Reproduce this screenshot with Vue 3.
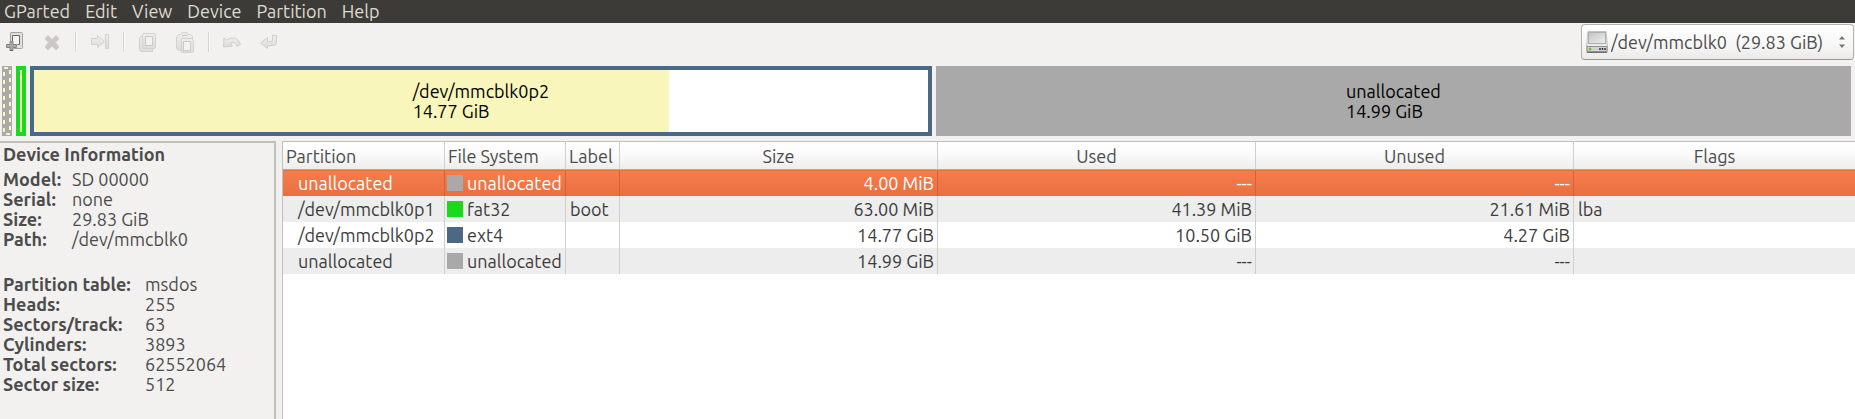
<script setup>
import { ref } from 'vue'

const menus = ['GParted', 'Edit', 'View', 'Device', 'Partition', 'Help']
const device = ref('/dev/mmcblk0')

const identity = [
  ['Model:', 'SD 00000'],
  ['Serial:', 'none'],
  ['Size:', '29.83 GiB'],
  ['Path:', '/dev/mmcblk0'],
]
const geometry = [
  ['Partition table:', 'msdos'],
  ['Heads:', '255'],
  ['Sectors/track:', '63'],
  ['Cylinders:', '3893'],
  ['Total sectors:', '62552064'],
  ['Sector size:', '512'],
]

const rows = [
  { name: 'unallocated', fs: 'unallocated', kind: 'free', label: '', size: '4.00 MiB', used: '---', unused: '---', flags: '' },
  { name: '/dev/mmcblk0p1', fs: 'fat32', kind: 'fat', label: 'boot', size: '63.00 MiB', used: '41.39 MiB', unused: '21.61 MiB', flags: 'lba' },
  { name: '/dev/mmcblk0p2', fs: 'ext4', kind: 'ext', label: '', size: '14.77 GiB', used: '10.50 GiB', unused: '4.27 GiB', flags: '' },
  { name: 'unallocated', fs: 'unallocated', kind: 'free', label: '', size: '14.99 GiB', used: '---', unused: '---', flags: '' },
]
const selected = ref(0)
const usedPercent = (10.5 / 14.77) * 100
</script>

<template>
  <div class="window">
    <nav class="menubar">
      <button v-for="m in menus" :key="m" type="button">{{ m }}</button>
    </nav>

    <div class="toolbar">
      <svg class="defs" width="0" height="0" aria-hidden="true">
        <defs>
          <linearGradient id="pale" x1="0" y1="0" x2="0" y2="1">
            <stop offset="0" stop-color="#efeeed" />
            <stop offset="1" stop-color="#dedcda" />
          </linearGradient>
        </defs>
      </svg>
      <div class="group">
        <button type="button" aria-label="New">
          <svg viewBox="0 0 24 24">
            <path d="M8 2.500H18.500Q19.500 2.500 19.500 3.500V17.500Q19.500 18.500 18.500 18.500H8.500Q7.500 18.500 7.500 17.500V3.500Q7.500 2.500 8 2.500Z" fill="#e0dfde" stroke="#a3a19e" />
            <path d="M9.500 5.500H16.500V14.500H9.500Z" fill="#f6f5f4" stroke="#696867" />
            <path d="M6 11.500H11V14H14.500V18H11V21.500H6V18H2.500V14H6Z" fill="#f2f1f0" />
            <path d="M7 11.500H10V14.500H13.500V17.500H10V20.500H7V17.500H3.500V14.500H7Z" fill="#aaa9a6" stroke="#858482" />
            <path d="M7 20.500H10" stroke="#5f5e5c" />
          </svg>
        </button>
        <button type="button" aria-label="Delete" disabled>
          <svg viewBox="0 0 24 24">
            <path d="M8 5.500 12 9.500 16 5.500 19 8.500 15.500 12.500 19 17 16 20 12 16 8 20 5 17 8.500 12.500 5 8.500Z" fill="#cbc7c4" stroke="#d2cecb" stroke-linejoin="round" />
          </svg>
        </button>
      </div>
      <span class="sep"></span>
      <button type="button" aria-label="Resize/Move" disabled>
        <svg viewBox="0 0 24 24">
          <path d="M3.500 8.500H9.500V5.500L16.500 11.500 9.500 17.500V14.500H3.500Z" fill="url(#pale)" stroke="#d3d1cf" stroke-linejoin="round" />
          <path d="M17.500 4.500H20.500V18.500H17.500Z" fill="url(#pale)" stroke="#d3d1cf" />
        </svg>
      </button>
      <span class="sep"></span>
      <div class="group">
        <button type="button" aria-label="Copy" disabled>
          <svg viewBox="0 0 24 24">
            <path d="M5.500 6.500H16.500V21.500H5.500Q3.500 21.500 3.500 19.500V8.500Q3.500 6.500 5.500 6.500Z" fill="url(#pale)" stroke="#d3d1cf" />
            <path d="M8 3.500H18Q19.500 3.500 19.500 5V17Q19.500 18.500 18 18.500H8Q6.500 18.500 6.500 17V5Q6.500 3.500 8 3.500Z" fill="url(#pale)" stroke="#d3d1cf" />
            <path d="M9.500 6.500H16.500V15.500H9.500Z" fill="#f3f2f1" stroke="#cbc9c7" />
          </svg>
        </button>
        <button type="button" aria-label="Paste" disabled>
          <svg viewBox="0 0 24 24">
            <path d="M5.500 4.500H8L9 2.500H14L15 4.500H17.500L19.500 6.500V20.500H5.500L3.500 18.500V6.500Z" fill="url(#pale)" stroke="#d3d1cf" stroke-linejoin="round" />
            <path d="M9 5.500H14" stroke="#c9c7c5" />
            <path d="M8.500 8.500H18.500L20.500 10.500V21.500Q20.500 22.500 19.500 22.500H9.500Q8.500 22.500 8.500 21.500Z" fill="url(#pale)" stroke="#d3d1cf" />
            <path d="M10.500 11.500H17.500V20.500H10.500Z" fill="#f3f2f1" stroke="#cbc9c7" />
          </svg>
        </button>
      </div>
      <span class="sep"></span>
      <div class="group">
        <button type="button" aria-label="Undo" disabled>
          <svg viewBox="0 0 24 24">
            <path d="M3 8 5.500 10Q15 4 19.500 14L16.500 16.500Q14 11 9.500 13L11.500 16 2.500 17Z" fill="url(#pale)" stroke="#d0cecb" stroke-linejoin="round" />
          </svg>
        </button>
        <button type="button" aria-label="Apply" disabled>
          <svg viewBox="0 0 24 24">
            <path d="M14.500 5.500H18.500V12Q18.500 15.500 15 15.500H9.500V18.500L2.500 13 9.500 7.500V11.500H13Q14.500 11.500 14.500 10Z" fill="url(#pale)" stroke="#d0cecb" stroke-linejoin="round" />
          </svg>
        </button>
      </div>

      <div class="combo">
        <svg class="disk" viewBox="0 0 22 22" aria-hidden="true">
          <defs>
            <linearGradient id="plate" x1="0" y1="0" x2="1" y2="1">
              <stop offset="0" stop-color="#c4c4c4" />
              <stop offset="1" stop-color="#eeeeee" />
            </linearGradient>
          </defs>
          <path d="M2 .5H20L21.500 15V20.500Q21.500 21.500 20.500 21.500H1.500Q.5 21.500 .5 20.500V15Z" fill="#e9e9e9" stroke="#c2c2c2" />
          <rect x="2.500" y="1.500" width="17" height="11" fill="url(#plate)" stroke="#b0b0b0" />
          <path d="M1 15.500H21V20.500H1Z" fill="#d2d2d2" stroke="#929292" />
          <path d="M1 21.500H21" stroke="#6c6c6c" />
          <circle cx="4" cy="18" r="1.500" fill="#6fc23a" />
          <path d="M14 17V19M16.500 17V19M19 17V19" stroke="#333" stroke-width="1.500" />
        </svg>
        <select v-model="device" aria-label="Device">
          <option value="/dev/mmcblk0">/dev/mmcblk0&nbsp; (29.83 GiB)</option>
        </select>
        <svg class="arrows" viewBox="0 0 6 12" aria-hidden="true">
          <path d="M0 3.500 3 0 6 3.500ZM0 8.500H6L3 12Z" fill="#777572" />
        </svg>
      </div>
    </div>

    <div class="disk-map">
      <div class="part free tiny">
        <svg viewBox="0 0 10 70" aria-hidden="true">
          <rect x="2" y="2" width="6" height="66" fill="none" stroke="#f8f6bb" stroke-width="2" stroke-dasharray="4 4" />
        </svg>
      </div>
      <div class="part fat tiny"></div>
      <div class="part ext">
        <div class="fill" :style="{ width: usedPercent + '%' }"></div>
        <div class="caption">/dev/mmcblk0p2<br />14.77 GiB</div>
      </div>
      <div class="part free rest">
        <div class="caption">unallocated<br />14.99 GiB</div>
      </div>
    </div>

    <div class="body">
      <aside class="info">
        <h2>Device Information</h2>
        <dl class="identity">
          <template v-for="[k, v] in identity" :key="k"><dt>{{ k }}</dt><dd>{{ v }}</dd></template>
        </dl>
        <dl class="geometry">
          <template v-for="[k, v] in geometry" :key="k"><dt>{{ k }}</dt><dd>{{ v }}</dd></template>
        </dl>
      </aside>

      <main class="list">
        <table>
          <colgroup>
            <col class="c-name" /><col class="c-fs" /><col class="c-label" />
            <col class="c-num" /><col class="c-num" /><col class="c-num" /><col />
          </colgroup>
          <thead>
            <tr>
              <th class="left">Partition</th><th class="left">File System</th><th class="left">Label</th>
              <th>Size</th><th>Used</th><th>Unused</th><th>Flags</th>
            </tr>
          </thead>
          <tbody>
            <tr v-for="(r, i) in rows" :key="i" :class="{ selected: i === selected }" @click="selected = i">
              <td class="name">{{ r.name }}</td>
              <td class="fs"><div><i :class="r.kind"></i>{{ r.fs }}</div></td>
              <td>{{ r.label }}</td>
              <td class="num">{{ r.size }}</td>
              <td class="num">{{ r.used }}</td>
              <td class="num">{{ r.unused }}</td>
              <td>{{ r.flags }}</td>
            </tr>
          </tbody>
        </table>
      </main>
    </div>
  </div>
</template>

<style>
body {
  margin: 0;
}
</style>

<style scoped>
.window {
  display: flex;
  flex-direction: column;
  min-height: 100vh;
  background: #f2f1f0;
  color: #4c4c4c;
  font: 18px/20px Ubuntu, "Noto Sans", sans-serif;
}
button,
select {
  margin: 0;
  padding: 0;
  border: 0;
  background: none;
  color: inherit;
  font: inherit;
}
.menubar {
  display: flex;
  gap: 15px;
  height: 23px;
  padding-left: 4px;
  background: #3c3b37;
  color: #dfdbd2;
}
.menubar button {
  height: 21px;
}
.toolbar {
  display: flex;
  align-items: center;
  gap: 11px;
  height: 36px;
  padding: 1px 1px 6px 3px;
}
.defs {
  position: absolute;
}
.group {
  display: flex;
  gap: 13px;
}
.toolbar button,
.toolbar button svg {
  display: block;
  width: 24px;
  height: 24px;
}
.sep {
  width: 1px;
  height: 20px;
  border-right: 1px solid #fafafa;
  background: #d6d4d1;
}
.combo {
  display: flex;
  align-items: center;
  box-sizing: border-box;
  height: 36px;
  margin-left: auto;
  padding: 0 8px 0 4px;
  border: 1px solid #b5b2ae;
  border-bottom-color: #9d9a96;
  border-radius: 4px;
  background: linear-gradient(#ffffff, #f7f6f6 60%, #ebeae9);
}
.disk {
  width: 22px;
  height: 22px;
}
.combo select {
  width: 231px;
  height: 28px;
  padding-left: 3px;
  appearance: none;
  outline: 0;
}
.arrows {
  width: 6px;
  height: 12px;
}
.disk-map {
  display: flex;
  gap: 4px;
  height: 70px;
  padding: 0 4px 5px 2px;
}
.part {
  position: relative;
  display: flex;
  align-items: center;
  justify-content: center;
  box-sizing: border-box;
  color: #000;
}
.tiny {
  flex: 0 0 10px;
}
.tiny svg {
  width: 10px;
  height: 70px;
}
.free {
  background: #a9a9a9;
}
.fat {
  background: #1ada1d;
}
.part.fat {
  border: 4px solid #1ada1d;
  background: #f8f6bb;
}
.ext {
  background: #4b6983;
}
.part.ext {
  flex: 1477 1 8px;
  border: 4px solid #4b6983;
  background: #fff;
}
.rest {
  flex: 1499 1 8px;
}
.fill {
  position: absolute;
  top: 0;
  bottom: 0;
  left: 0;
  background: #f8f6bb;
}
.caption {
  position: relative;
}
.body {
  display: flex;
  flex: 1;
  gap: 6px;
}
.info {
  box-sizing: border-box;
  width: 276px;
  padding: 1px 3px;
  border-top: 2px solid #c1c0b8;
  border-right: 2px solid #c1c0b8;
}
h2 {
  margin: 0 0 5px;
  font-size: 18px;
  line-height: 20px;
}
dl {
  display: grid;
  margin: 0;
}
dt {
  font-weight: bold;
  white-space: nowrap;
}
dd {
  margin: 0;
}
.identity {
  grid-template-columns: 69px 1fr;
  margin-bottom: 25px;
}
.geometry {
  grid-template-columns: 142px 1fr;
}
.list {
  flex: 1;
  border-top: 1px solid #c1c0b8;
  border-left: 1px solid #c1c0b8;
  background: #fff;
}
table {
  width: 100%;
  table-layout: fixed;
  border-collapse: separate;
  border-spacing: 0;
}
.c-name {
  width: 162px;
}
.c-fs {
  width: 121px;
}
.c-label {
  width: 54px;
}
.c-num {
  width: 318px;
}
th,
td {
  box-sizing: border-box;
  overflow: hidden;
  border-right: 1px solid #cfcfce;
  text-align: left;
  white-space: nowrap;
}
th:last-child,
td:last-child {
  border-right: 0;
}
th {
  height: 28px;
  padding: 0 3px;
  border-bottom: 1px solid #aeaba7;
  background: linear-gradient(#ffffff, #f9f9f9 50%, #eeedec);
  font-weight: normal;
  text-align: center;
}
th.left {
  text-align: left;
}
td {
  height: 26px;
  padding: 0 4px;
  color: #3c3c3c;
}
td.name {
  padding: 0 0 0 15px;
}
td.fs {
  padding: 0 0 0 2px;
}
.fs div {
  display: flex;
  align-items: center;
  gap: 4px;
}
.fs i {
  width: 16px;
  height: 16px;
}
td.num {
  padding-right: 3px;
  text-align: right;
}
tbody tr:nth-child(even) td {
  background: #ededed;
}
tbody tr.selected td {
  border-right-color: #cf643c;
  background: linear-gradient(#e5713f 1px, #f47d4e 1px, #ea6f3f);
  color: #fff;
}
</style>
